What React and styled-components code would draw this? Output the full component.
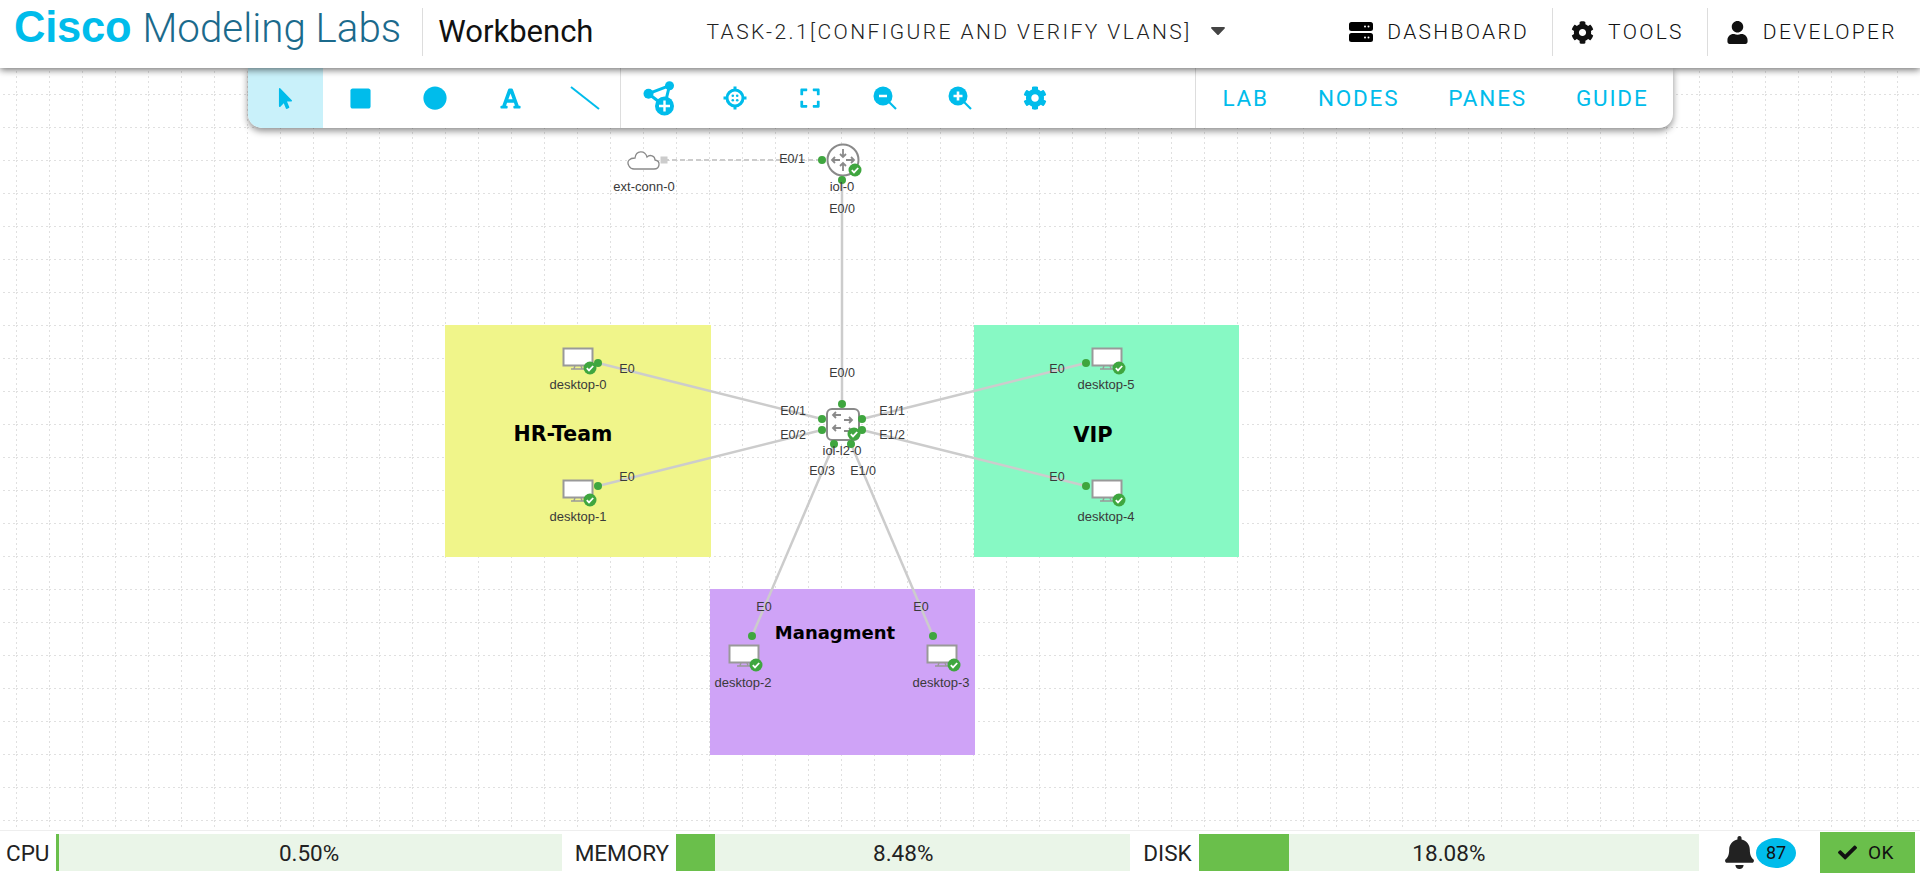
import React from "react";
import styled, { createGlobalStyle } from "styled-components";
import {
  FaBell,
  FaCaretDown,
  FaCheck,
  FaCircle,
  FaCog,
  FaExpand,
  FaFont,
  FaMousePointer,
  FaSquare,
  FaUser,
} from "react-icons/fa";

const CYAN = "#00bceb";
const GREEN = "#3fa63f";
const CANVAS_TOP = 68;

const GlobalStyle = createGlobalStyle`
  html, body { margin: 0; padding: 0; height: 100%; overflow: hidden; background: #fff; }
  body { font-family: Roboto, "Liberation Sans", sans-serif; }
`;

const Page = styled.div`
  display: flex;
  flex-direction: column;
  height: 100vh;
`;

const Header = styled.header`
  position: relative;
  z-index: 3;
  box-sizing: border-box;
  display: flex;
  align-items: center;
  flex: 0 0 68px;
  padding-bottom: 4px;
  background: #fff;
  box-shadow: 0 2px 7px rgba(0, 0, 0, 0.55);
`;

const Logo = styled.div`
  display: flex;
  align-items: baseline;
  gap: 11px;
  padding: 0 21px 0 14px;
  height: 48px;
  line-height: 39px;
  border-right: 1px solid #ddd;
  white-space: nowrap;
`;

const LogoBold = styled.span`
  font-family: "Liberation Sans", Arial, sans-serif;
  font-weight: 700;
  font-size: 43.5px;
  letter-spacing: -0.2px;
  color: ${CYAN};
`;

const LogoLight = styled.span`
  font-weight: 300;
  font-size: 40.3px;
  color: #1b6a8c;
`;

const AppName = styled.div`
  margin: -2px 0 0 15px;
  font-size: 31px;
  font-weight: 400;
  color: #111;
`;

const LabTitle = styled.div`
  display: flex;
  align-items: center;
  gap: 14px;
  margin-left: 113px;
  font-size: 21px;
  font-weight: 300;
  letter-spacing: 2.42px;
  color: #222;
  white-space: nowrap;
  svg { color: #444; margin-top: -4px; }
`;

const Nav = styled.nav`
  display: flex;
  margin-left: auto;
`;

const NavItem = styled.div`
  display: flex;
  align-items: center;
  gap: 14px;
  height: 48px;
  padding: 0 23px 0 18px;
  font-size: 21px;
  font-weight: 300;
  letter-spacing: 2.3px;
  color: #111;
  border-left: ${(p) => (p.$first ? "none" : "1px solid #ddd")};
`;

const Canvas = styled.main`
  position: relative;
  flex: 1;
  overflow: hidden;
  background: #fff;
`;

const DrawLayer = styled.svg`
  position: absolute;
  inset: 0;
  width: 100%;
  height: 100%;
  z-index: ${(p) => p.$z || 0};
`;

const Toolbar = styled.div`
  position: absolute;
  z-index: 2;
  top: 0;
  left: 0;
  right: 0;
  margin: 0 auto;
  width: 1425px;
  height: 60px;
  display: flex;
  background: #fff;
  border-radius: 0 0 14px 14px;
  box-shadow: 0 3px 7px rgba(0, 0, 0, 0.45);
  overflow: hidden;
`;

const ToolGroup = styled.div`
  display: flex;
  box-sizing: border-box;
  border-right: 1px solid #ddd;
  flex: ${(p) => (p.$grow ? 1 : "0 0 373px")};
  padding-left: ${(p) => (p.$grow ? 2 : 0)}px;
  min-width: 0;
`;

const ToolButton = styled.div`
  display: flex;
  align-items: center;
  justify-content: center;
  flex: 0 0 75px;
  height: 60px;
  color: ${CYAN};
  background: ${(p) => (p.$active ? "#c9f1fa" : "transparent")};
`;

const MenuGroup = styled.div`
  display: flex;
  align-items: center;
  gap: 49px;
  padding: 0 24px 0 26px;
`;

const MenuLink = styled.div`
  font-size: 22.5px;
  font-weight: 400;
  letter-spacing: 1.8px;
  color: ${CYAN};
`;

const Note = styled.div`
  position: absolute;
  left: ${(p) => p.$x}px;
  top: ${(p) => p.$y - CANVAS_TOP}px;
  width: ${(p) => p.$w}px;
  height: ${(p) => p.$h}px;
  background: ${(p) => p.$color};
`;

const NoteText = styled.div`
  position: absolute;
  z-index: 1;
  left: ${(p) => p.$x}px;
  top: ${(p) => p.$y - CANVAS_TOP}px;
  transform: translate(-50%, -50%);
  font-family: "Comic Sans MS", "DejaVu Sans", sans-serif;
  font-size: ${(p) => p.$size}px;
  font-weight: 700;
  color: #000;
  white-space: nowrap;
`;

const TinyText = styled.div`
  position: absolute;
  z-index: 1;
  left: ${(p) => p.$x}px;
  top: ${(p) => p.$y - CANVAS_TOP}px;
  transform: translate(-50%, -50%);
  font-family: "Liberation Sans", Arial, sans-serif;
  font-size: ${(p) => (p.$port ? 12.5 : 13)}px;
  line-height: 16px;
  color: #3a3a3a;
  white-space: nowrap;
`;

const StatusBar = styled.footer`
  flex: 0 0 43px;
  box-sizing: border-box;
  display: flex;
  align-items: flex-start;
  background: #fff;
  border-top: 1px solid #eee;
  font-size: 22.5px;
  color: #222;
`;

const Gauges = styled.div`
  flex: 1;
  display: flex;
  gap: 13px;
  padding: 3px 0 0 6px;
`;

const Gauge = styled.div`
  flex: 1;
  display: flex;
  align-items: center;
  gap: 7px;
`;

const GaugeTrack = styled.div`
  position: relative;
  flex: 1;
  height: 37px;
  background: #eaf5e8;
`;

const GaugeFill = styled.div`
  height: 100%;
  background: #6abf4b;
`;

const GaugeValue = styled.div`
  position: absolute;
  inset: 0;
  display: flex;
  align-items: center;
  justify-content: center;
`;

const Alerts = styled.div`
  display: flex;
  align-items: center;
  margin: 3px 24px 0 24px;
  height: 37px;
`;

const AlertCount = styled.div`
  display: flex;
  align-items: center;
  justify-content: center;
  width: 40px;
  height: 30px;
  border-radius: 50%;
  background: ${CYAN};
  font-size: 18px;
  color: #111;
`;

const OkButton = styled.div`
  display: flex;
  align-items: center;
  justify-content: center;
  gap: 11px;
  width: 95px;
  height: 41px;
  margin: 1px 5px 0 0;
  padding-right: 3px;
  box-sizing: border-box;
  background: #6abf4b;
  font-size: 19px;
  letter-spacing: 0.5px;
  color: #111;
`;

function ServerIcon() {
  return (
    <svg width="24" height="20" viewBox="0 0 24 20">
      <rect x="0" y="0" width="24" height="9" rx="2.5" fill="#000" />
      <rect x="0" y="11" width="24" height="9" rx="2.5" fill="#000" />
      <circle cx="16" cy="4.5" r="1" fill="#fff" />
      <circle cx="19.5" cy="4.5" r="1" fill="#fff" />
      <circle cx="16" cy="15.5" r="1" fill="#fff" />
      <circle cx="19.5" cy="15.5" r="1" fill="#fff" />
    </svg>
  );
}

function LineTool() {
  return (
    <svg width="30" height="24" viewBox="0 0 30 24">
      <line x1="1" y1="1" x2="29" y2="23" stroke={CYAN} strokeWidth="2" />
    </svg>
  );
}

function AddNodeIcon() {
  return (
    <svg width="36" height="36" viewBox="0 0 36 36">
      <path d="M6.5 13.7 L27.5 5.7 L22.5 26" fill="none" stroke={CYAN} strokeWidth="3" />
      <path d="M6.5 13.7 L22.5 26" fill="none" stroke={CYAN} strokeWidth="3" />
      <circle cx="6.5" cy="13.7" r="5" fill={CYAN} />
      <circle cx="27.5" cy="5.7" r="4.5" fill={CYAN} />
      <circle cx="22.5" cy="26" r="9.5" fill={CYAN} />
      <path d="M22.5 20.5 V31.5 M17 26 H28" stroke="#fff" strokeWidth="2.4" />
    </svg>
  );
}

function TargetIcon() {
  return (
    <svg width="24" height="24" viewBox="0 0 24 24">
      <circle cx="12" cy="12" r="8" fill="none" stroke={CYAN} strokeWidth="3" />
      <path d="M12 0.5 V4 M12 20 V23.5 M0.5 12 H4 M20 12 H23.5" stroke={CYAN} strokeWidth="3" />
      <circle cx="9.8" cy="9.8" r="1.3" fill={CYAN} />
      <circle cx="14.2" cy="9.8" r="1.3" fill={CYAN} />
      <circle cx="9.8" cy="14.2" r="1.3" fill={CYAN} />
      <circle cx="14.2" cy="14.2" r="1.3" fill={CYAN} />
    </svg>
  );
}

function ZoomIcon({ plus }) {
  return (
    <svg width="24" height="24" viewBox="0 0 24 24">
      <circle cx="10" cy="10" r="9.5" fill={CYAN} />
      <line x1="15" y1="15" x2="23" y2="23" stroke={CYAN} strokeWidth="2.2" />
      <path d={plus ? "M5.5 10 H14.5 M10 5.5 V14.5" : "M6 10 H14"} stroke="#fff" strokeWidth="2.6" />
    </svg>
  );
}

const tools = [
  <FaMousePointer size={21} />,
  <FaSquare size={23} />,
  <FaCircle size={24} />,
  <FaFont size={23} />,
  <LineTool />,
];

const viewTools = [
  <AddNodeIcon />,
  <TargetIcon />,
  <FaExpand size={22} />,
  <ZoomIcon />,
  <ZoomIcon plus />,
  <FaCog size={24} />,
];

const notes = [
  { x: 445, y: 325, w: 266, h: 232, color: "#f0f58a" },
  { x: 974, y: 325, w: 265, h: 232, color: "#87f9c4" },
  { x: 710, y: 589, w: 265, h: 166, color: "#cfa3f7" },
];

const noteTexts = [
  { text: "HR-Team", x: 563, y: 434, size: 20.5 },
  { text: "VIP", x: 1093, y: 435, size: 21 },
  { text: "Managment", x: 835, y: 632, size: 18 },
];

const links = [
  [842, 180, 842, 404],
  [598, 363, 822, 419],
  [598, 486, 822, 430],
  [1086, 363, 862, 419],
  [1086, 486, 862, 430],
  [752, 636, 834, 444],
  [933, 636, 851, 444],
];

const ports = [
  [822, 160], [842, 180], [842, 404], [822, 419], [822, 430], [862, 419], [862, 430],
  [834, 444], [851, 444], [598, 363], [598, 486], [1086, 363], [1086, 486], [752, 636], [933, 636],
];

const desktops = [
  { name: "desktop-0", x: 563, y: 348, labelX: 578, labelY: 385 },
  { name: "desktop-1", x: 563, y: 480, labelX: 578, labelY: 517 },
  { name: "desktop-2", x: 729, y: 645, labelX: 743, labelY: 683 },
  { name: "desktop-3", x: 927, y: 645, labelX: 941, labelY: 683 },
  { name: "desktop-4", x: 1092, y: 480, labelX: 1106, labelY: 517 },
  { name: "desktop-5", x: 1092, y: 348, labelX: 1106, labelY: 385 },
];

const portLabels = [
  { text: "E0/1", x: 792, y: 159 },
  { text: "E0/0", x: 842, y: 209 },
  { text: "E0/0", x: 842, y: 373 },
  { text: "E0/1", x: 793, y: 411 },
  { text: "E0/2", x: 793, y: 435 },
  { text: "E1/1", x: 892, y: 411 },
  { text: "E1/2", x: 892, y: 435 },
  { text: "E0/3", x: 822, y: 471 },
  { text: "E1/0", x: 863, y: 471 },
  { text: "E0", x: 627, y: 369 },
  { text: "E0", x: 627, y: 477 },
  { text: "E0", x: 1057, y: 369 },
  { text: "E0", x: 1057, y: 477 },
  { text: "E0", x: 764, y: 607 },
  { text: "E0", x: 921, y: 607 },
];

const gauges = [
  { label: "CPU", value: 0.5 },
  { label: "MEMORY", value: 8.48 },
  { label: "DISK", value: 18.08 },
];

function Badge({ x, y }) {
  return (
    <g transform={`translate(${x} ${y})`}>
      <circle r="6.5" fill={GREEN} />
      <path d="M-3.2 0.2 L-1 2.4 L3.2 -2" fill="none" stroke="#fff" strokeWidth="1.8" />
    </g>
  );
}

function Desktop({ x, y }) {
  return (
    <g transform={`translate(${x} ${y})`}>
      <rect x="0.5" y="0.5" width="29" height="17" fill="#fff" stroke="#999" strokeWidth="2" />
      <path d="M12 18 L11 20.5 M18 18 L19 20.5 M8 21 H22" stroke="#999" strokeWidth="1.4" fill="none" />
      <Badge x={27} y={20} />
    </g>
  );
}

function Arrow({ d }) {
  return <path d={d} fill="none" stroke="#8a8a8a" strokeWidth="1.8" />;
}

function RouterNode() {
  return (
    <g>
      <circle cx="843" cy="160" r="15.5" fill="#fff" stroke="#8a8a8a" strokeWidth="2" />
      <Arrow d="M843 149 V157 M840 154 L843 157 L846 154" />
      <Arrow d="M843 171 V163 M840 166 L843 163 L846 166" />
      <Arrow d="M840 160 H832 M835 157 L832 160 L835 163" />
      <Arrow d="M846 160 H854 M851 157 L854 160 L851 163" />
      <Badge x={855} y={170} />
    </g>
  );
}

function SwitchNode() {
  return (
    <g>
      <rect x="827" y="409" width="32" height="31" rx="5" fill="#fff" stroke="#8a8a8a" strokeWidth="2" />
      <Arrow d="M841 415 H833 M836 412 L833 415 L836 418" />
      <Arrow d="M844 420 H852 M849 417 L852 420 L849 423" />
      <Arrow d="M841 428 H833 M836 425 L833 428 L836 431" />
      <Arrow d="M844 431 H852 M849 428 L852 431 L849 434" />
      <Badge x={854} y={434} />
    </g>
  );
}

function Diagram() {
  return (
    <>
      <DrawLayer>
        <defs>
          <pattern id="grid" x="16" y="26" width="33" height="33" patternUnits="userSpaceOnUse">
            <path d="M0.5 0 V33 M0 0.5 H33" fill="none" stroke="#e0e0e0" strokeWidth="1" strokeDasharray="2 3" />
          </pattern>
        </defs>
        <rect width="100%" height="100%" fill="url(#grid)" />
      </DrawLayer>
      {notes.map((n) => (
        <Note key={n.x} $x={n.x} $y={n.y} $w={n.w} $h={n.h} $color={n.color} />
      ))}
      <DrawLayer $z={1} viewBox={`0 ${CANVAS_TOP} 1920 762`} preserveAspectRatio="xMinYMin">
        <line x1="664" y1="160" x2="822" y2="160" stroke="#ccc" strokeWidth="2" strokeDasharray="5 3" />
        {links.map(([x1, y1, x2, y2]) => (
          <line key={`${x1}-${y1}`} x1={x1} y1={y1} x2={x2} y2={y2} stroke="#ccc" strokeWidth="2.5" />
        ))}
        <path
          d="M634 169 H654 C660 169 661 161 655 160 C655 156 650 154 647 157 C645 150 636 150 635 158 C630 158 626 161 629 166 C630 168 632 169 634 169 Z"
          fill="#fff"
          stroke="#8a8a8a"
          strokeWidth="1.3"
        />
        <rect x="660.5" y="156.5" width="7" height="7" fill="#ccc" />
        <RouterNode />
        <SwitchNode />
        {desktops.map((d) => (
          <Desktop key={d.name} x={d.x} y={d.y} />
        ))}
        {ports.map(([x, y]) => (
          <circle key={`${x}-${y}`} cx={x} cy={y} r="4" fill={GREEN} />
        ))}
      </DrawLayer>
      {noteTexts.map((t) => (
        <NoteText key={t.text} $x={t.x} $y={t.y} $size={t.size}>{t.text}</NoteText>
      ))}
      {portLabels.map((p) => (
        <TinyText key={`${p.text}-${p.x}-${p.y}`} $port $x={p.x} $y={p.y}>{p.text}</TinyText>
      ))}
      <TinyText $x={644} $y={187}>ext-conn-0</TinyText>
      <TinyText $x={842} $y={187}>iol-0</TinyText>
      <TinyText $x={842} $y={451}>iol-l2-0</TinyText>
      {desktops.map((d) => (
        <TinyText key={d.name} $x={d.labelX} $y={d.labelY}>{d.name}</TinyText>
      ))}
    </>
  );
}

export default function App() {
  return (
    <Page>
      <GlobalStyle />
      <Header>
        <Logo>
          <LogoBold>Cisco</LogoBold>
          <LogoLight>Modeling Labs</LogoLight>
        </Logo>
        <AppName>Workbench</AppName>
        <LabTitle>
          TASK-2.1[CONFIGURE AND VERIFY VLANS]
          <FaCaretDown size={24} />
        </LabTitle>
        <Nav>
          <NavItem $first>
            <ServerIcon />
            DASHBOARD
          </NavItem>
          <NavItem>
            <FaCog size={23} />
            TOOLS
          </NavItem>
          <NavItem>
            <FaUser size={23} />
            DEVELOPER
          </NavItem>
        </Nav>
      </Header>
      <Canvas>
        <Diagram />
        <Toolbar>
          <ToolGroup>
            {tools.map((icon, i) => (
              <ToolButton key={i} $active={i === 0}>{icon}</ToolButton>
            ))}
          </ToolGroup>
          <ToolGroup $grow>
            {viewTools.map((icon, i) => (
              <ToolButton key={i}>{icon}</ToolButton>
            ))}
          </ToolGroup>
          <MenuGroup>
            <MenuLink>LAB</MenuLink>
            <MenuLink>NODES</MenuLink>
            <MenuLink>PANES</MenuLink>
            <MenuLink>GUIDE</MenuLink>
          </MenuGroup>
        </Toolbar>
      </Canvas>
      <StatusBar>
        <Gauges>
          {gauges.map((g) => (
            <Gauge key={g.label}>
              {g.label}
              <GaugeTrack>
                <GaugeFill style={{ width: `${g.value}%` }} />
                <GaugeValue>{g.value.toFixed(2)}%</GaugeValue>
              </GaugeTrack>
            </Gauge>
          ))}
        </Gauges>
        <Alerts>
          <FaBell size={33} color="#222" />
          <AlertCount>87</AlertCount>
        </Alerts>
        <OkButton>
          <FaCheck size={19} />
          OK
        </OkButton>
      </StatusBar>
    </Page>
  );
}
